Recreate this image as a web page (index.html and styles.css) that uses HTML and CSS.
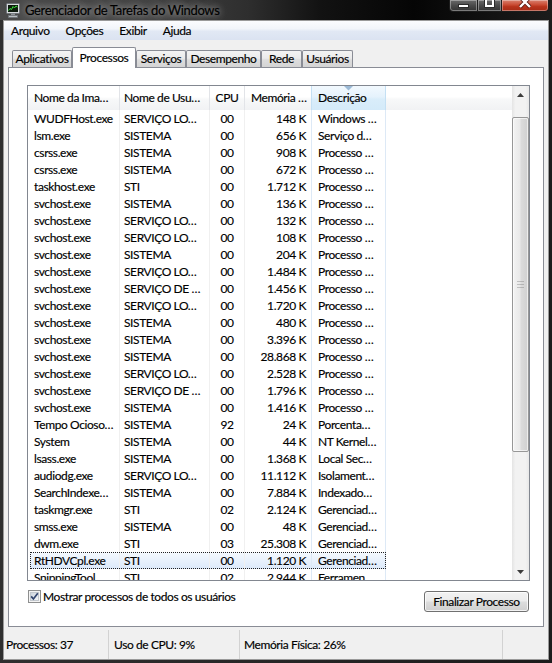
FILE: index.html
```html
<!DOCTYPE html>
<html lang="pt-BR">
<head>
<meta charset="utf-8">
<title>Gerenciador de Tarefas do Windows</title>
<link rel="stylesheet" href="styles.css">
</head>
<body>
<div class="window">
  <div class="titlebar">
    <svg class="app-icon" viewBox="0 0 16 16">
      <rect x="1.5" y="1.5" width="13" height="10" rx="1" fill="#d6d9dc" stroke="#6d7278"/>
      <rect x="3" y="3" width="10" height="7" fill="#0c1a0c"/>
      <polyline points="3.5,8.5 5,6.5 6.5,7.5 8,4.5 9.5,6 11,4 12.5,5" fill="none" stroke="#3be23b" stroke-width="1"/>
      <rect x="6" y="11.5" width="4" height="2" fill="#8d9296"/>
      <rect x="3.5" y="13.5" width="9" height="2" fill="#b9bec2" stroke="#6d7278" stroke-width="0.8"/>
    </svg>
    <span class="title">Gerenciador de Tarefas do Windows</span>
    <div class="caption-btns">
      <div class="cbtn min">
        <svg width="11" height="4" viewBox="0 0 11 4"><rect x="0.5" y="0.5" width="10" height="3" fill="#fff" stroke="#2b2b2b"/></svg>
      </div>
      <div class="cbtn max">
        <svg width="11" height="8" viewBox="0 0 11 8"><path d="M0.5 -2 V7.5 H10.5 V-2" fill="none" stroke="#2b2b2b"/><path d="M2 -2 V6 H9 V-2" fill="none" stroke="#fff" stroke-width="2"/></svg>
      </div>
      <div class="cbtn close">
        <svg width="14" height="9" viewBox="0 0 14 9"><path d="M2 -3 L12 7 M12 -3 L2 7" stroke="#5a1a10" stroke-width="4"/><path d="M2 -3 L12 7 M12 -3 L2 7" stroke="#fff" stroke-width="2.4"/></svg>
      </div>
    </div>
  </div>

  <div class="client">
    <div class="menubar">
      <span class="menu-item">Arquivo</span>
      <span class="menu-item">Opções</span>
      <span class="menu-item">Exibir</span>
      <span class="menu-item">Ajuda</span>
    </div>

    <div class="tabs">
      <div class="tab w-apl">Aplicativos</div>
      <div class="tab active w-proc">Processos</div>
      <div class="tab w-serv">Serviços</div>
      <div class="tab w-des">Desempenho</div>
      <div class="tab w-rede">Rede</div>
      <div class="tab w-usu">Usuários</div>
    </div>

    <div class="panel">
      <div class="listview">
        <div class="lv-main">
          <div class="lv-header">
            <div class="hcell h1">Nome da Ima…</div>
            <div class="hcell h2">Nome de Usu…</div>
            <div class="hcell h3">CPU</div>
            <div class="hcell h4">Memória …</div>
            <div class="hcell h5 sorted">
              <svg class="sort-arrow" width="9" height="5" viewBox="0 0 9 5"><polygon points="0,0 9,0 4.5,4.5" fill="#9cbad6"/></svg>
              Descrição
            </div>
            <div class="hfill"></div>
          </div>
          <div class="lv-body">
            <div class="row"><span>WUDFHost.exe</span><span>SERVIÇO LO…</span><span class="c">00</span><span class="r">148 K</span><span class="d">Windows …</span></div>
            <div class="row"><span>lsm.exe</span><span>SISTEMA</span><span class="c">00</span><span class="r">656 K</span><span class="d">Serviço d…</span></div>
            <div class="row"><span>csrss.exe</span><span>SISTEMA</span><span class="c">00</span><span class="r">908 K</span><span class="d">Processo …</span></div>
            <div class="row"><span>csrss.exe</span><span>SISTEMA</span><span class="c">00</span><span class="r">672 K</span><span class="d">Processo …</span></div>
            <div class="row"><span>taskhost.exe</span><span>STI</span><span class="c">00</span><span class="r">1.712 K</span><span class="d">Processo …</span></div>
            <div class="row"><span>svchost.exe</span><span>SISTEMA</span><span class="c">00</span><span class="r">136 K</span><span class="d">Processo …</span></div>
            <div class="row"><span>svchost.exe</span><span>SERVIÇO LO…</span><span class="c">00</span><span class="r">132 K</span><span class="d">Processo …</span></div>
            <div class="row"><span>svchost.exe</span><span>SERVIÇO LO…</span><span class="c">00</span><span class="r">108 K</span><span class="d">Processo …</span></div>
            <div class="row"><span>svchost.exe</span><span>SISTEMA</span><span class="c">00</span><span class="r">204 K</span><span class="d">Processo …</span></div>
            <div class="row"><span>svchost.exe</span><span>SERVIÇO LO…</span><span class="c">00</span><span class="r">1.484 K</span><span class="d">Processo …</span></div>
            <div class="row"><span>svchost.exe</span><span>SERVIÇO DE …</span><span class="c">00</span><span class="r">1.456 K</span><span class="d">Processo …</span></div>
            <div class="row"><span>svchost.exe</span><span>SERVIÇO LO…</span><span class="c">00</span><span class="r">1.720 K</span><span class="d">Processo …</span></div>
            <div class="row"><span>svchost.exe</span><span>SISTEMA</span><span class="c">00</span><span class="r">480 K</span><span class="d">Processo …</span></div>
            <div class="row"><span>svchost.exe</span><span>SISTEMA</span><span class="c">00</span><span class="r">3.396 K</span><span class="d">Processo …</span></div>
            <div class="row"><span>svchost.exe</span><span>SISTEMA</span><span class="c">00</span><span class="r">28.868 K</span><span class="d">Processo …</span></div>
            <div class="row"><span>svchost.exe</span><span>SERVIÇO LO…</span><span class="c">00</span><span class="r">2.528 K</span><span class="d">Processo …</span></div>
            <div class="row"><span>svchost.exe</span><span>SERVIÇO DE …</span><span class="c">00</span><span class="r">1.796 K</span><span class="d">Processo …</span></div>
            <div class="row"><span>svchost.exe</span><span>SISTEMA</span><span class="c">00</span><span class="r">1.416 K</span><span class="d">Processo …</span></div>
            <div class="row"><span>Tempo Ocioso…</span><span>SISTEMA</span><span class="c">92</span><span class="r">24 K</span><span class="d">Porcenta…</span></div>
            <div class="row"><span>System</span><span>SISTEMA</span><span class="c">00</span><span class="r">44 K</span><span class="d">NT Kernel…</span></div>
            <div class="row"><span>lsass.exe</span><span>SISTEMA</span><span class="c">00</span><span class="r">1.368 K</span><span class="d">Local Sec…</span></div>
            <div class="row"><span>audiodg.exe</span><span>SERVIÇO LO…</span><span class="c">00</span><span class="r">11.112 K</span><span class="d">Isolament…</span></div>
            <div class="row"><span>SearchIndexe…</span><span>SISTEMA</span><span class="c">00</span><span class="r">7.884 K</span><span class="d">Indexado…</span></div>
            <div class="row"><span>taskmgr.exe</span><span>STI</span><span class="c">02</span><span class="r">2.124 K</span><span class="d">Gerenciad…</span></div>
            <div class="row"><span>smss.exe</span><span>SISTEMA</span><span class="c">00</span><span class="r">48 K</span><span class="d">Gerenciad…</span></div>
            <div class="row"><span>dwm.exe</span><span>STI</span><span class="c">03</span><span class="r">25.308 K</span><span class="d">Gerenciad…</span></div>
            <div class="row sel"><span>RtHDVCpl.exe</span><span>STI</span><span class="c">00</span><span class="r">1.120 K</span><span class="d">Gerenciad…</span></div>
            <div class="row"><span>SnippingTool.…</span><span>STI</span><span class="c">02</span><span class="r">2.944 K</span><span class="d">Ferramen…</span></div>
          </div>
        </div>
        <div class="scrollbar">
          <div class="sb-arrow"><svg width="7" height="4" viewBox="0 0 7 4"><polygon points="3.5,0 7,4 0,4" fill="#3c3c3c"/></svg></div>
          <div class="sb-track"><div class="sb-thumb"><span class="grip"></span></div></div>
          <div class="sb-arrow"><svg width="7" height="4" viewBox="0 0 7 4"><polygon points="0,0 7,0 3.5,4" fill="#3c3c3c"/></svg></div>
        </div>
      </div>

      <div class="actions">
        <label class="check">
          <svg width="13" height="13" viewBox="0 0 13 13">
            <defs>
              <linearGradient id="cbg" x1="0" y1="0" x2="1" y2="1">
                <stop offset="0" stop-color="#cbd3dc"/>
                <stop offset="1" stop-color="#f6f7f9"/>
              </linearGradient>
            </defs>
            <rect x="0.5" y="0.5" width="12" height="12" fill="#f4f4f4" stroke="#8e8f8f"/>
            <rect x="2.5" y="2.5" width="8" height="8" fill="url(#cbg)" stroke="#c3c8ce"/>
            <path d="M3.2 6.4 L5.4 9 L9.8 3.2" fill="none" stroke="#32456f" stroke-width="1.7"/>
          </svg>
          <span>Mostrar processos de todos os usuários</span>
        </label>
        <button class="btn" type="button">Finalizar Processo</button>
      </div>
    </div>

    <div class="statusbar">
      <div class="sb-sec s1">Processos: 37</div>
      <div class="sb-sec s2">Uso de CPU: 9%</div>
      <div class="sb-sec s3">Memória Física: 26%</div>
      <div class="sb-sec s4"></div>
    </div>
  </div>
</div>
</body>
</html>
```

FILE: styles.css
```css
* { box-sizing: border-box; }

html, body {
  margin: 0;
  padding: 0;
}

body {
  width: 552px;
  height: 663px;
  overflow: hidden;
  background: #222;
  font-family: "Lato", "Liberation Sans", sans-serif;
  font-size: 12px;
  letter-spacing: -0.4px;
  color: #000;
  -webkit-text-stroke: 0.15px #000;
}

.window {
  width: 552px;
  height: 663px;
  display: flex;
  flex-direction: column;
  background: linear-gradient(90deg, #2f2f2f 0%, #262626 50%, #1b1b1b 100%);
}

/* ---------- title bar ---------- */
.titlebar {
  height: 20px;
  flex: none;
  display: flex;
  align-items: flex-start;
  background: linear-gradient(90deg, #4a4a4a 0%, #444 25%, #2e2e2e 45%, #121212 58%, #050505 75%, #1c1c1c 100%);
}

.app-icon {
  width: 16px;
  height: 16px;
  flex: none;
  margin: 2px 0 0 5px;
}

.title {
  margin-left: 4px;
  font-size: 13px;
  letter-spacing: -0.35px;
  line-height: 20px;
  white-space: nowrap;
  color: #000;
  text-shadow: 0 0 6px rgba(255,255,255,.5), 0 0 12px rgba(255,255,255,.4), 0 0 18px rgba(255,255,255,.25);
}

.caption-btns {
  margin-left: auto;
  margin-right: 3px;
  display: flex;
}

.cbtn {
  height: 12px;
  display: flex;
  justify-content: center;
  align-items: flex-start;
  border: 1px solid #1c1c1c;
  border-top: none;
  box-shadow: inset 0 0 0 1px rgba(255,255,255,.35);
}

.cbtn.min {
  width: 29px;
  border-radius: 0 0 0 4px;
  padding-top: 4px;
  background: linear-gradient(#6a6a6a, #474747 55%, #333 100%);
}

.cbtn.max {
  width: 24px;
  border-left: none;
  background: linear-gradient(#6a6a6a, #474747 55%, #333 100%);
}

.cbtn.close {
  width: 47px;
  border-left: none;
  border-radius: 0 0 4px 0;
  background: linear-gradient(#d9826f 0%, #c94a32 45%, #b8341c 60%, #a62c16 100%);
}

/* ---------- client ---------- */
.client {
  flex: 1;
  min-height: 0;
  margin: 0 3px 3px;
  border: 1px solid #9a9a9a;
  background: #f0f0f0;
  display: flex;
  flex-direction: column;
}

.menubar {
  height: 19px;
  flex: none;
  display: flex;
  align-items: center;
  padding-left: 0;
  background: linear-gradient(#fbfcfe 0%, #f2f5fa 40%, #e1e8f4 55%, #dbe3f1 100%);
}

.menu-item {
  padding: 0 8px;
  line-height: 19px;
}

.menu-item:first-child {
  margin-left: -1px;
}

.tabs {
  height: 27px;
  flex: none;
  display: flex;
  align-items: flex-end;
  padding-left: 8px;
  position: relative;
  z-index: 1;
}

.tab {
  height: 17px;
  border: 1px solid #898c95;
  border-bottom: none;
  border-radius: 2px 2px 0 0;
  background: linear-gradient(#f3f3f3 0%, #ebebeb 45%, #dddddd 55%, #d4d4d4 100%);
  text-align: center;
  line-height: 16px;
  white-space: nowrap;
}

.tab.active {
  height: 21px;
  margin-bottom: -1px;
  background: #fff;
  line-height: 19px;
}

.w-apl { width: 60px; }
.w-proc { width: 64px; }
.w-serv { width: 50px; }
.w-des { width: 75px; }
.w-rede { width: 41px; }
.w-usu { width: 51px; }

.panel {
  height: 560px;
  flex: none;
  margin: 0 4px;
  border: 1px solid #898c95;
  background: #fff;
  padding: 17px 13px 14px 18px;
  display: flex;
  flex-direction: column;
}

/* ---------- list view ---------- */
.listview {
  height: 496px;
  flex: none;
  border: 1px solid #828790;
  display: flex;
  background: #fff;
}

.lv-main {
  flex: 1;
  min-width: 0;
  overflow: hidden;
  display: flex;
  flex-direction: column;
}

.lv-header {
  height: 24px;
  flex: none;
  display: flex;
  background: linear-gradient(#ffffff 0%, #ffffff 45%, #f7f8f9 55%, #f1f2f4 100%);
}

.hcell {
  flex: none;
  position: relative;
  border-right: 1px solid #e2e4e8;
  line-height: 24px;
  white-space: nowrap;
  overflow: hidden;
}

.h1 { width: 92px; padding-left: 6px; }
.h2 { width: 90px; padding-left: 4px; }
.h3 { width: 35px; text-align: center; }
.h4 { width: 67px; padding-left: 6px; }
.h5 { width: 74px; padding-left: 6px; }

.hcell.sorted {
  background: linear-gradient(#f2f9fe 0%, #e5f2fc 45%, #d9edfa 55%, #d4eaf9 100%);
  border-left: 1px solid #c4e0f4;
  border-right: 1px solid #c4e0f4;
  margin-left: -1px;
  width: 75px;
}

.sort-arrow {
  position: absolute;
  top: 0;
  left: 50%;
  margin-left: -5px;
}

.hfill { flex: 1; }

.lv-body {
  flex: 1;
  min-height: 0;
  overflow: hidden;
}

.row {
  display: grid;
  grid-template-columns: 90px 90px 35px 67px 74px;
  width: 356px;
  height: 17px;
  margin-left: 2px;
  line-height: 17px;
}

.row > span {
  border-right: 1px solid #f0f0f0;
  padding-left: 4px;
  white-space: nowrap;
  overflow: hidden;
}

.row > span.c {
  padding: 0;
  text-align: center;
}

.row > span.r {
  padding: 0 5px 0 0;
  text-align: right;
  border-right-color: #dde9f6;
}

.row > span.d {
  padding-left: 6px;
  border-right-color: #dde9f6;
}

.row.sel {
  background: linear-gradient(#f6fafe 0%, #e8f1fc 50%, #dce9fa 100%);
  outline: 1px dotted #222;
  outline-offset: -1px;
}

/* ---------- scrollbar ---------- */
.scrollbar {
  width: 17px;
  flex: none;
  display: flex;
  flex-direction: column;
  background: linear-gradient(90deg, #e4e4e4 0%, #f2f2f2 20%, #f2f2f2 80%, #e8e8e8 100%);
}

.sb-arrow {
  height: 17px;
  flex: none;
  display: flex;
  align-items: center;
  justify-content: center;
}

.sb-track {
  flex: 1;
  padding-top: 14px;
}

.sb-thumb {
  height: 335px;
  border: 1px solid #979797;
  border-radius: 2px;
  background: linear-gradient(90deg, #f3f3f3 0%, #e9e9e9 45%, #dbdbdb 55%, #d0d0d0 100%);
  box-shadow: inset 0 0 0 1px rgba(255,255,255,.6);
  display: flex;
  align-items: center;
  justify-content: center;
}

.grip {
  width: 7px;
  height: 7px;
  background: repeating-linear-gradient(#6e6e6e 0 1px, transparent 1px 3px);
  opacity: .35;
}

/* ---------- actions ---------- */
.actions {
  margin-top: 10px;
  height: 21px;
  flex: none;
  display: flex;
  justify-content: space-between;
  align-items: flex-start;
}

.check {
  display: flex;
  align-items: center;
  margin: -1px 0 0 1px;
  line-height: 13px;
}

.check svg {
  flex: none;
  margin-right: 2px;
}

.btn {
  width: 105px;
  height: 21px;
  margin-right: 1px;
  padding: 0;
  font: inherit;
  letter-spacing: inherit;
  color: #000;
  border: 1px solid #707070;
  border-radius: 3px;
  background: linear-gradient(#f2f2f2 0%, #ebebeb 48%, #dddddd 52%, #cfcfcf 100%);
  box-shadow: inset 0 0 0 1px rgba(255,255,255,.75);
}

/* ---------- status bar ---------- */
.statusbar {
  height: 29px;
  flex: none;
  margin-top: 3px;
  display: flex;
}

.sb-sec {
  display: flex;
  align-items: center;
  white-space: nowrap;
  border-right: 1px solid #d2d2d2;
}

.s1 { width: 105px; padding-left: 2px; }
.s2 { width: 131px; padding-left: 5px; }
.s3 { width: 263px; padding-left: 4px; }
.s4 { flex: 1; border-right: none; }
```
